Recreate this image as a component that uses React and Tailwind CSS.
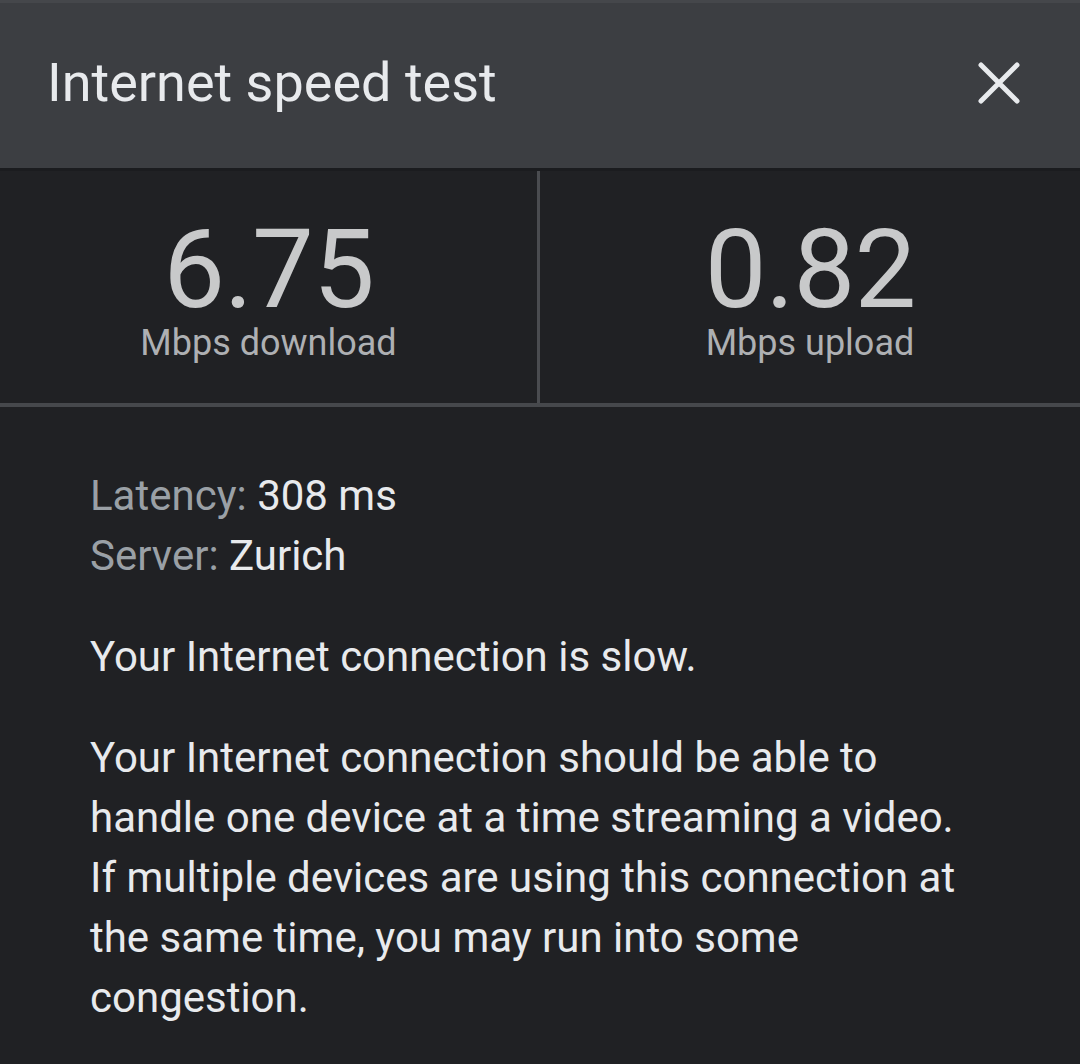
const font = { fontFamily: "Roboto, 'Noto Sans', sans-serif" };

const CloseIcon = () => (
  <svg width="42" height="42" viewBox="0 0 42 42" fill="none">
    <path d="M3 3 L39 39 M39 3 L3 39" stroke="#e8eaed" strokeWidth="5" strokeLinecap="round" />
  </svg>
);

const Stat = ({ value, label, border }) => (
  <div className={`flex flex-col items-center justify-center pt-[2px] ${border ? "border-r-[3px] border-[#4a4c50]" : ""}`}>
    <div className="text-[110px] leading-none text-[#c8c9ca] tracking-[-1px]">{value}</div>
    <div className="text-[36px] leading-none text-[#aeb0b3]">{label}</div>
  </div>
);

export default function App() {
  return (
    <div style={font} className="w-[1080px] h-[1064px] bg-[#202124] overflow-hidden">
      <div className="h-[168px] bg-[#3c3e42] border-t-[3px] border-[#45474b] flex items-center justify-between pl-[47px] pr-[60px] pb-[6px]">
        <h1 className="text-[54px] leading-none text-[#e8eaed] font-normal">Internet speed test</h1>
        <CloseIcon />
      </div>
      <div className="h-[3px] bg-[#1b1c1f]" />

      <div className="grid grid-cols-2 h-[236px] border-b-[4px] border-[#46484c]">
        <Stat value="6.75" label="Mbps download" border />
        <Stat value="0.82" label="Mbps upload" />
      </div>

      <div className="pt-[59px] pl-[90px] pr-[113px] text-[42px] leading-[60px] text-[#e8eaed]">
        <div>
          <span className="text-[#9aa0a6]">Latency: </span>308 ms
        </div>
        <div>
          <span className="text-[#9aa0a6]">Server: </span>Zurich
        </div>
        <p className="mt-[41px]">Your Internet connection is slow.</p>
        <p className="mt-[41px]">
          Your Internet connection should be able to handle one device at a time streaming a video. If multiple devices are using this connection at the same time, you may run into some congestion.
        </p>
      </div>
    </div>
  );
}
